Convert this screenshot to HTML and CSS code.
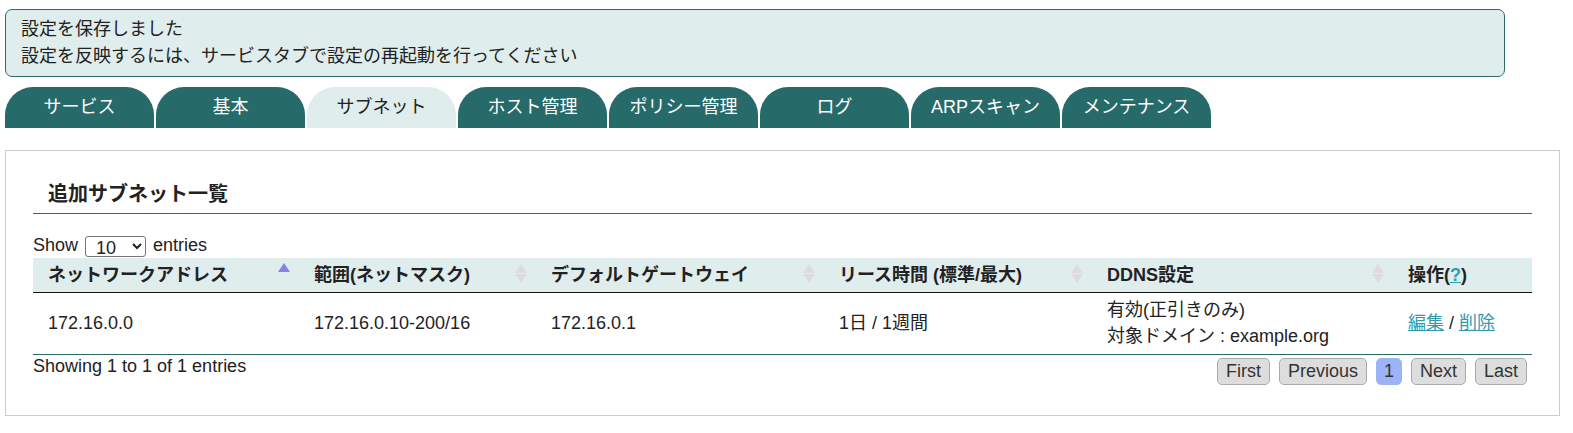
FILE: index.html
```html
<!DOCTYPE html>
<html lang="ja">
<head>
    <meta charset="UTF-8">
    <title>サブネット設定</title>
    <link rel="stylesheet" href="styles.css">
</head>
<body>
    <!-- 保存メッセージ -->
    <div class="notice">
        <p>設定を保存しました</p>
        <p>設定を反映するには、サービスタブで設定の再起動を行ってください</p>
    </div>

    <!-- タブ -->
    <ul class="tabs">
        <li class="tab">サービス</li>
        <li class="tab">基本</li>
        <li class="tab active">サブネット</li>
        <li class="tab">ホスト管理</li>
        <li class="tab">ポリシー管理</li>
        <li class="tab">ログ</li>
        <li class="tab">ARPスキャン</li>
        <li class="tab">メンテナンス</li>
    </ul>

    <div class="panel">
        <h2 class="panel-title">追加サブネット一覧</h2>

        <div class="length">
            Show
            <select class="length-select">
                <option>10</option>
                <option>25</option>
                <option>50</option>
            </select>
            entries
        </div>

        <table class="list">
            <colgroup>
                <col style="width: 266px">
                <col style="width: 237px">
                <col style="width: 288px">
                <col style="width: 268px">
                <col style="width: 301px">
                <col>
            </colgroup>
            <thead>
                <tr>
                    <th class="sorting_asc">ネットワークアドレス</th>
                    <th class="sorting">範囲(ネットマスク)</th>
                    <th class="sorting">デフォルトゲートウェイ</th>
                    <th class="sorting">リース時間 (標準/最大)</th>
                    <th class="sorting">DDNS設定</th>
                    <th>操作(<a href="#">?</a>)</th>
                </tr>
            </thead>
            <tbody>
                <tr>
                    <td>172.16.0.0</td>
                    <td>172.16.0.10-200/16</td>
                    <td>172.16.0.1</td>
                    <td>1日 / 1週間</td>
                    <td>有効(正引きのみ)<br>対象ドメイン : example.org</td>
                    <td><a href="#">編集</a> / <a href="#">削除</a></td>
                </tr>
            </tbody>
        </table>

        <div class="table-foot">
            <div class="info">Showing 1 to 1 of 1 entries</div>
            <div class="paginate">
                <a class="page-btn" href="#">First</a>
                <a class="page-btn" href="#">Previous</a>
                <a class="page-btn current" href="#">1</a>
                <a class="page-btn" href="#">Next</a>
                <a class="page-btn" href="#">Last</a>
            </div>
        </div>
    </div>
</body>
</html>
```

FILE: styles.css
```css
/* 基本 */
* {
    box-sizing: border-box;
}

body {
    margin: 0;
    padding: 9px 0 0 5px;
    font-family: "Liberation Sans", Arial, "Noto Sans CJK JP", sans-serif;
    font-size: 18px;
    color: #222;
    background: #fff;
}

p {
    margin: 0;
}

a {
    color: #2f9cae;
}

/* 保存メッセージ */
.notice {
    width: 1500px;
    height: 68px;
    padding: 6px 15px;
    line-height: 27px;
    background: #e0eded;
    border: 1px solid #2d6b6b;
    border-radius: 7px;
}

/* タブ */
.tabs {
    display: flex;
    gap: 2px;
    margin: 10px 0 0;
    padding: 0;
    list-style: none;
}

.tab {
    width: 149px;
    height: 41px;
    line-height: 40px;
    text-align: center;
    color: #fff;
    background: #266a6a;
    border-radius: 28px 28px 0 0;
}

.tab.active {
    color: #222;
    background: #e0eded;
}

/* パネル */
.panel {
    width: 1555px;
    margin-top: 22px;
    padding: 0 27px 30px;
    border: 1px solid #ccc;
}

.panel-title {
    margin: 27px 0 0;
    padding: 0 0 3px 15px;
    font-size: 20px;
    line-height: 32px;
    font-weight: bold;
    border-bottom: 1px solid #2d6a6a;
}

.length {
    margin-top: 19px;
    line-height: 24px;
    height: 25px;
}

.length-select {
    width: 61px;
    height: 21px;
    margin: 0 2px;
    padding: 0 2px 0 6px;
    font-family: inherit;
    font-size: 18px;
    color: #222;
    background: #fff;
    border: 1px solid #767676;
    border-radius: 3px;
    vertical-align: -3px;
}

/* 一覧テーブル */
.list {
    width: 100%;
    table-layout: fixed;
    border-collapse: collapse;
}

.list th {
    position: relative;
    padding: 5px 15px;
    line-height: 24px;
    text-align: left;
    font-weight: bold;
    background: #e0eded;
    border-bottom: 1px solid #111;
    white-space: nowrap;
}

.list td {
    padding: 4px 15px 5px;
    line-height: 26px;
    vertical-align: middle;
    border-bottom: 1px solid #2d6a6a;
}

/* ソートアイコン */
.sorting::before,
.sorting::after,
.sorting_asc::before {
    content: "";
    position: absolute;
    right: 9px;
    border-left: 6px solid transparent;
    border-right: 6px solid transparent;
}

.sorting::before {
    top: 6px;
    border-bottom: 9px solid #dcdcdc;
}

.sorting::after {
    top: 16px;
    border-top: 9px solid #dcdcdc;
}

.sorting_asc::before {
    top: 5px;
    border-bottom: 9px solid #8484e4;
}

/* フッター */
.table-foot {
    display: flex;
    justify-content: space-between;
    align-items: flex-start;
}

.info {
    line-height: 22px;
}

.paginate {
    display: flex;
    gap: 9px;
    margin: 3px 5px 0 0;
}

.page-btn {
    height: 27px;
    padding: 0 8px;
    line-height: 25px;
    color: #333;
    text-decoration: none;
    background: #ddd;
    border: 1px solid #aaa;
    border-radius: 5px;
}

.page-btn.current {
    padding: 0 7px;
    background: #9bb4f7;
    border-color: #9bb4f7;
}
```
